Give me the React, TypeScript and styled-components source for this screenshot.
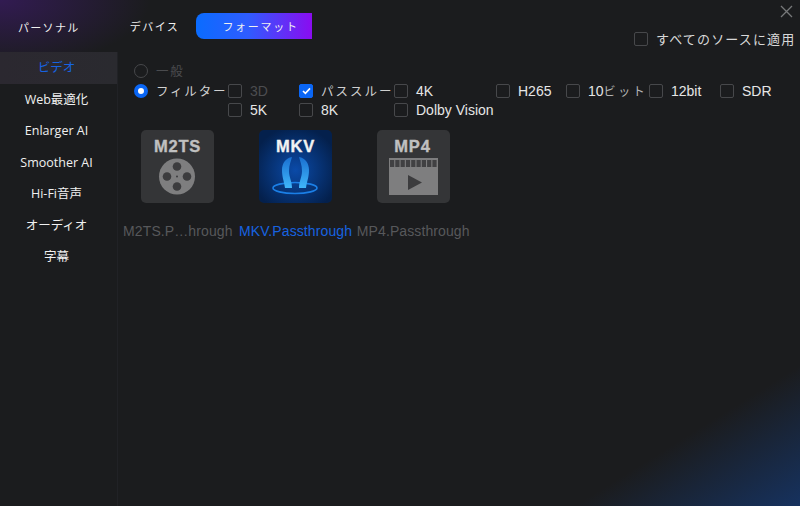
import React from "react";
import styled, { createGlobalStyle } from "styled-components";

const Global = createGlobalStyle`
  html, body { margin: 0; padding: 0; background: #1b1c1e; }
  #root { width: 800px; height: 506px; overflow: hidden; }
  * { box-sizing: border-box; }
`;

const Page = styled.div`
  position: relative;
  width: 800px;
  height: 506px;
  overflow: hidden;
  display: flex;
  flex-direction: column;
  font-family: "Liberation Sans", "Noto Sans CJK JP", sans-serif;
  color: #e8e8e8;
  background:
    radial-gradient(ellipse 150px 68px at 0 0, #321b52 0%, rgba(50, 27, 82, 0.5) 50%, rgba(50, 27, 82, 0) 100%),
    linear-gradient(148deg, rgba(22, 50, 95, 0) 86%, #16325f 100%),
    #1b1c1e;
`;

const TopBar = styled.header`
  height: 52px;
  flex: none;
  display: flex;
  align-items: flex-start;
`;

const Brand = styled.div`
  width: 118px;
  padding: 19px 0 0 18px;
  font: 400 11px/16px "Noto Sans CJK JP", sans-serif;
  letter-spacing: 1.3px;
  color: #f0f0f0;
`;

const Tabs = styled.nav`
  display: flex;
  margin-top: 13px;
`;

const Tab = styled.div<{ $active?: boolean }>`
  height: 26px;
  font: 400 11px/26px "Noto Sans CJK JP", sans-serif;
  letter-spacing: ${(p) => (p.$active ? "1.7px" : "1.4px")};
  color: #f0f0f0;
  text-align: center;
  width: ${(p) => (p.$active ? "116px" : "78px")};
  padding: ${(p) => (p.$active ? "0 0 0 13px" : "0 5px 0 0")};
  border-radius: 8px 0 0 8px;
  background: ${(p) => (p.$active ? "linear-gradient(90deg, #0a6cff 0%, #2f5cff 45%, #8a0cf0 100%)" : "transparent")};
`;

const Close = styled.svg`
  position: absolute;
  top: 5px;
  right: 7px;
  width: 13px;
  height: 13px;
`;

const ApplyAll = styled.label`
  position: absolute;
  top: 30px;
  left: 634px;
  display: flex;
  align-items: center;
  gap: 8px;
  font: 400 13px/18px "Noto Sans CJK JP", sans-serif;
  letter-spacing: 1.15px;
  color: #d8d8d8;
  white-space: nowrap;
`;

const Body = styled.div`
  flex: 1;
  display: flex;
  min-height: 0;
`;

const Sidebar = styled.aside`
  width: 118px;
  flex: none;
  border-right: 1px solid #212226;
  display: flex;
  flex-direction: column;
`;

const NavItem = styled.div<{ $active?: boolean }>`
  height: 31.5px;
  flex: none;
  padding-right: 4px;
  text-align: center;
  font: 400 12.5px/31px "Open Sans", "Noto Sans CJK JP", sans-serif;
  color: ${(p) => (p.$active ? "#1763e0" : "#f0f0f0")};
  background: ${(p) => (p.$active ? "linear-gradient(90deg, #2b2830, #2a2a2f)" : "transparent")};
`;

const Main = styled.main`
  flex: 1;
  padding-top: 9px;
`;

const FilterArea = styled.div`
  display: flex;
  padding-left: 16px;
`;

const Modes = styled.div`
  width: 94px;
  flex: none;
  display: flex;
  flex-direction: column;
`;

const Mode = styled.div<{ $disabled?: boolean }>`
  height: 20px;
  display: flex;
  align-items: center;
  gap: 8px;
  white-space: nowrap;
  font: 400 12.5px/20px "Noto Sans CJK JP", sans-serif;
  letter-spacing: 1.8px;
  color: ${(p) => (p.$disabled ? "#4a4b4e" : "#d0d0d0")};
`;

const Radio = styled.span<{ $on?: boolean }>`
  width: 14px;
  height: 14px;
  flex: none;
  border-radius: 50%;
  border: ${(p) => (p.$on ? "4px solid #0a66f5" : "1px solid #47484b")};
  background: ${(p) => (p.$on ? "#fff" : "transparent")};
`;

const Options = styled.div`
  margin-top: 20px;
  display: grid;
  grid-template-columns: 71px 95px 102px 70px 83px 71px auto;
  grid-auto-rows: 19.5px;
`;

const Option = styled.div<{ $disabled?: boolean }>`
  display: flex;
  align-items: center;
  gap: 8px;
  white-space: nowrap;
  font-size: 14px;
  color: ${(p) => (p.$disabled ? "#4c4d50" : "#e6e6e6")};
`;

const Check = styled.span<{ $on?: boolean }>`
  width: 14px;
  height: 14px;
  flex: none;
  border-radius: 2px;
  display: flex;
  align-items: center;
  justify-content: center;
  border: 1px solid ${(p) => (p.$on ? "#0a66f5" : "#47484b")};
  background: ${(p) => (p.$on ? "#0a66f5" : "transparent")};
`;

const Jp = styled.span`
  font: 400 12.5px/18px "Noto Sans CJK JP", sans-serif;
  letter-spacing: 2px;
  color: #d0d0d0;
`;

const JpTight = styled.span`
  font: 400 12px/18px "Noto Sans CJK JP", sans-serif;
  letter-spacing: 2.6px;
  color: #b4b4b4;
`;

const Formats = styled.div`
  display: flex;
  margin-top: 10px;
  padding-left: 1px;
`;

const FormatCard = styled.div<{ $active?: boolean }>`
  width: 117.7px;
  flex: none;
  display: flex;
  flex-direction: column;
  align-items: center;
  font-size: 14px;
  line-height: 18px;
  letter-spacing: 0.1px;
  white-space: nowrap;
  color: ${(p) => (p.$active ? "#1763e0" : "#57585b")};
`;

const FormatIcon = styled.svg`
  width: 73px;
  height: 73px;
  margin-bottom: 19px;
  display: block;
`;

const IconText = styled.text`
  font: 700 16.5px "Liberation Sans", sans-serif;
  letter-spacing: 0.8px;
  text-anchor: middle;
  stroke-width: 0.35px;
`;

const Tick = () => (
  <svg width="9" height="8" viewBox="0 0 9 8" fill="none">
    <path d="M1 4l2.4 2.4L8 1.4" stroke="#fff" strokeWidth="1.6" />
  </svg>
);

const M2tsIcon = () => (
  <FormatIcon viewBox="0 0 73 73">
    <rect width="73" height="73" rx="5" fill="#343537" />
    <IconText x="36.5" y="22" fill="#c0c0c0" stroke="#c0c0c0">M2TS</IconText>
    <circle cx="36" cy="46.500" r="18" fill="#7e7e7f" />
    <circle cx="36" cy="36.500" r="4.300" fill="#3c3c3e" />
    <circle cx="36" cy="56.500" r="4.300" fill="#3c3c3e" />
    <circle cx="26" cy="46.500" r="4.300" fill="#3c3c3e" />
    <circle cx="46" cy="46.500" r="4.300" fill="#3c3c3e" />
    <circle cx="36" cy="46.500" r="1" fill="#3c3c3e" />
  </FormatIcon>
);

const MkvIcon = () => (
  <FormatIcon viewBox="0 0 73 73">
    <defs>
      <radialGradient id="mkvBg" cx="50%" cy="55%" r="60%">
        <stop offset="0%" stopColor="#0a4aa8" />
        <stop offset="100%" stopColor="#04204c" />
      </radialGradient>
      <linearGradient id="mkvFlow" x1="0" y1="0" x2="0" y2="1">
        <stop offset="0%" stopColor="#1a6fd0" />
        <stop offset="100%" stopColor="#3fb6fb" />
      </linearGradient>
    </defs>
    <rect width="73" height="73" rx="5" fill="url(#mkvBg)" />
    <IconText x="36.5" y="22" fill="#f2f2f2" stroke="#f2f2f2">MKV</IconText>
    <ellipse cx="36" cy="58" rx="22" ry="5.500" fill="none" stroke="#1b7fe6" strokeWidth="1.6" />
    <path d="M33 27C27 28 23 33 23 40C23 47 25 51 26 58L33 58C33 51 30 47 30 41C30 35 32 31 33 27z" fill="url(#mkvFlow)" />
    <path d="M40 27C46 28 50 33 50 40C50 47 48 51 47 58L40 58C40 51 43 47 43 41C43 35 41 31 40 27z" fill="url(#mkvFlow)" />
  </FormatIcon>
);

const holes = [0, 1, 2, 3, 4, 5, 6, 7, 8];

const Mp4Icon = () => (
  <FormatIcon viewBox="0 0 73 73">
    <rect width="73" height="73" rx="5" fill="#343537" />
    <IconText x="35.5" y="22" fill="#c0c0c0" stroke="#c0c0c0">MP4</IconText>
    <rect x="12" y="28" width="49" height="37" fill="#7e7e7f" />
    {holes.map((i) => (
      <rect key={i} x={13 + i * 5.3} y="30" width="4.200" height="7" fill="#414143" />
    ))}
    <path d="M31 45l14 7.500-14 7.500z" fill="#3c3c3e" />
  </FormatIcon>
);

const navItems = ["ビデオ", "Web最適化", "Enlarger AI", "Smoother AI", "Hi-Fi音声", "オーディオ", "字幕"];

export default function App() {
  return (
    <Page>
      <Global />
      <TopBar>
        <Brand>パーソナル</Brand>
        <Tabs>
          <Tab>デバイス</Tab>
          <Tab $active>フォーマット</Tab>
        </Tabs>
      </TopBar>
      <Close viewBox="0 0 13 13" fill="none">
        <path d="M1 1l11 11M12 1L1 12" stroke="#77787a" strokeWidth="1.3" />
      </Close>
      <ApplyAll>
        <Check />
        すべてのソースに適用
      </ApplyAll>
      <Body>
        <Sidebar>
          {navItems.map((n, i) => (
            <NavItem key={n} $active={i === 0}>{n}</NavItem>
          ))}
        </Sidebar>
        <Main>
          <FilterArea>
            <Modes>
              <Mode $disabled><Radio />一般</Mode>
              <Mode><Radio $on />フィルター</Mode>
            </Modes>
            <Options>
              <Option $disabled><Check />3D</Option>
              <Option><Check $on><Tick /></Check><Jp>パススルー</Jp></Option>
              <Option><Check />4K</Option>
              <Option><Check />H265</Option>
              <Option><Check /><span>10<JpTight>ビット</JpTight></span></Option>
              <Option><Check />12bit</Option>
              <Option><Check />SDR</Option>
              <Option><Check />5K</Option>
              <Option><Check />8K</Option>
              <Option><Check />Dolby Vision</Option>
            </Options>
          </FilterArea>
          <Formats>
            <FormatCard><M2tsIcon />M2TS.P…hrough</FormatCard>
            <FormatCard $active><MkvIcon />MKV.Passthrough</FormatCard>
            <FormatCard><Mp4Icon />MP4.Passthrough</FormatCard>
          </Formats>
        </Main>
      </Body>
    </Page>
  );
}
